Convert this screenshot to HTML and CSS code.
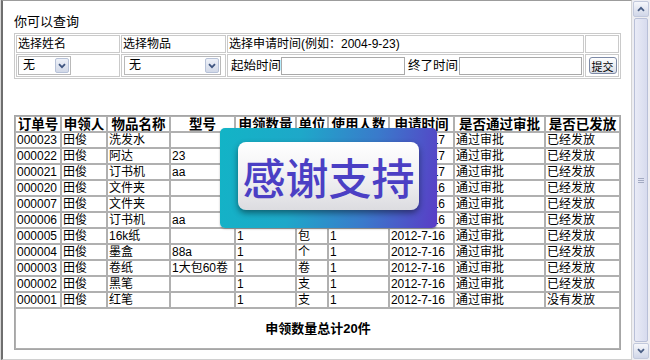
FILE: index.html
```html
<!DOCTYPE html>
<html lang="zh">
<head>
<meta charset="utf-8">
<title>申领查询</title>
<link rel="stylesheet" href="styles.css">
</head>
<body>
<div class="frame">
  <div class="title">你可以查询</div>
  <table class="search">
    <tr class="r1">
      <td class="c1">选择姓名</td>
      <td class="c2">选择物品</td>
      <td class="c3">选择申请时间(例如：2004-9-23)</td>
      <td class="c4"></td>
    </tr>
    <tr class="r2">
      <td><div class="select w1"><span class="val">无</span><span class="arrow"><svg width="8" height="6" viewBox="0 0 8 6"><path d="M1 1.2l3 3 3-3" fill="none" stroke="#3f5580" stroke-width="1.8"/></svg></span></div></td>
      <td><div class="select w2"><span class="val">无</span><span class="arrow"><svg width="8" height="6" viewBox="0 0 8 6"><path d="M1 1.2l3 3 3-3" fill="none" stroke="#3f5580" stroke-width="1.8"/></svg></span></div></td>
      <td><div class="dates"><span class="lbl">起始时间</span><span class="input in1"></span><span class="lbl lbl2">终了时间</span><span class="input in2"></span></div></td>
      <td class="btncell"><button class="btn" type="button">提交</button></td>
    </tr>
  </table>

  <table class="list">
    <colgroup>
      <col class="k1"><col class="k2"><col class="k3"><col class="k4"><col class="k5">
      <col class="k6"><col class="k7"><col class="k8"><col class="k9"><col class="k10">
    </colgroup>
    <thead>
      <tr><th>订单号</th><th>申领人</th><th>物品名称</th><th>型号</th><th>申领数量</th><th>单位</th><th>使用人数</th><th>申请时间</th><th>是否通过审批</th><th>是否已发放</th></tr>
    </thead>
    <tbody>
      <tr><td>000023</td><td>田俊</td><td>洗发水</td><td></td><td></td><td></td><td></td><td class="d">2012-7-17</td><td>通过审批</td><td>已经发放</td></tr>
      <tr><td>000022</td><td>田俊</td><td>阿达</td><td>23</td><td></td><td></td><td></td><td class="d">2012-7-17</td><td>通过审批</td><td>已经发放</td></tr>
      <tr><td>000021</td><td>田俊</td><td>订书机</td><td>aa</td><td></td><td></td><td></td><td class="d">2012-7-17</td><td>通过审批</td><td>已经发放</td></tr>
      <tr><td>000020</td><td>田俊</td><td>文件夹</td><td></td><td></td><td></td><td></td><td class="d">2012-7-16</td><td>通过审批</td><td>已经发放</td></tr>
      <tr><td>000007</td><td>田俊</td><td>文件夹</td><td></td><td></td><td></td><td></td><td class="d">2012-7-16</td><td>通过审批</td><td>已经发放</td></tr>
      <tr><td>000006</td><td>田俊</td><td>订书机</td><td>aa</td><td></td><td></td><td></td><td class="d">2012-7-16</td><td>通过审批</td><td>已经发放</td></tr>
      <tr><td>000005</td><td>田俊</td><td>16k纸</td><td></td><td>1</td><td>包</td><td>1</td><td class="d">2012-7-16</td><td>通过审批</td><td>已经发放</td></tr>
      <tr><td>000004</td><td>田俊</td><td>墨盒</td><td>88a</td><td>1</td><td>个</td><td>1</td><td class="d">2012-7-16</td><td>通过审批</td><td>已经发放</td></tr>
      <tr><td>000003</td><td>田俊</td><td>卷纸</td><td>1大包60卷</td><td>1</td><td>卷</td><td>1</td><td class="d">2012-7-16</td><td>通过审批</td><td>已经发放</td></tr>
      <tr><td>000002</td><td>田俊</td><td>黑笔</td><td></td><td>1</td><td>支</td><td>1</td><td class="d">2012-7-16</td><td>通过审批</td><td>已经发放</td></tr>
      <tr><td>000001</td><td>田俊</td><td>红笔</td><td></td><td>1</td><td>支</td><td>1</td><td class="d">2012-7-16</td><td>通过审批</td><td>没有发放</td></tr>
      <tr class="total"><td colspan="10">申领数量总计20件</td></tr>
    </tbody>
  </table>

  <div class="thanks"><div class="thanks-card">感谢支持</div></div>
</div>
<div class="scroll">
  <div class="sbtn"><svg width="8" height="6" viewBox="0 0 8 6"><path d="M1 4.8l3-3 3 3" fill="none" stroke="#4a5f86" stroke-width="1.8"/></svg></div>
  <div class="thumb"><span class="grip"></span></div>
  <div class="sbtn"><svg width="8" height="6" viewBox="0 0 8 6"><path d="M1 1.2l3 3 3-3" fill="none" stroke="#4a5f86" stroke-width="1.8"/></svg></div>
</div>
</body>
</html>
```
FILE: styles.css
```css
html, body {
  margin: 0;
  padding: 0;
}
body {
  width: 650px;
  height: 360px;
  overflow: hidden;
  display: flex;
  background: #d8d8d8;
  font-family: "Liberation Sans", "Noto Sans CJK SC", sans-serif;
  color: #000;
}
.frame {
  position: relative;
  width: 631px;
  height: 360px;
  box-sizing: border-box;
  margin-left: 1px;
  background: #fff;
  border-top: 1px solid #9c9c9c;
  border-left: 2px solid #6f6f6f;
  border-bottom: 1px solid #d0d0d0;
  border-right: 1px solid #d4d4d4;
  padding: 13px 0 0 11px;
  overflow: hidden;
}
.title {
  font-size: 13px;
  line-height: 16px;
  height: 16px;
}

/* search table */
.search {
  margin-top: 3px;
  width: 607px;
  table-layout: fixed;
  border-collapse: separate;
  border-spacing: 1px;
  border: 1px solid #cacaca;
  font-size: 12px;
}
.search td {
  box-sizing: border-box;
  border: 1px solid #cacaca;
  padding: 0 1px;
  white-space: nowrap;
  overflow: hidden;
}
.search .c1 { width: 104px; }
.search .c2 { width: 105px; }
.search .c3 { width: 357px; }
.search .c4 { width: 34px; }
.search .r1 td { height: 18px; line-height: 16px; }
.search .r2 td { height: 23px; line-height: 16px; }

.select {
  display: flex;
  align-items: center;
  justify-content: space-between;
  height: 19px;
  box-sizing: border-box;
  border: 1px solid #b9b9b9;
  background: #fff;
  padding-left: 4px;
}
.select.w1 { width: 53px; }
.select.w2 { width: 97px; margin-left: 1px; }
.val { font-size: 12px; line-height: 15px; }
.arrow {
  width: 14px;
  height: 15px;
  margin-right: 1px;
  box-sizing: border-box;
  border: 1px solid #b7c2d8;
  border-radius: 2px;
  background: linear-gradient(#eef1f8, #d2d9e8);
  display: flex;
  align-items: center;
  justify-content: center;
}
.dates {
  display: flex;
  align-items: center;
}
.lbl { font-size: 12.5px; line-height: 16px; padding-left: 2px; }
.lbl2 { padding-left: 3px; padding-right: 1px; }
.input {
  height: 18px;
  box-sizing: border-box;
  border: 1px solid #a9a9a9;
  background: #fff;
}
.in1 { width: 124px; }
.in2 { width: 123px; }
.btncell { text-align: center; }
.btn {
  width: 28px;
  height: 17px;
  padding: 0;
  margin: 0 0 0 1px;
  font-family: "Noto Sans CJK SC", sans-serif;
  font-size: 11px;
  line-height: 14px;
  color: #000;
  border: 1px solid #7d8aa6;
  border-radius: 3px;
  background: linear-gradient(#ffffff, #d9dde6);
  vertical-align: middle;
}

/* list table */
.list {
  margin-top: 36px;
  width: 607px;
  table-layout: fixed;
  border-collapse: separate;
  border-spacing: 0;
  border: 1px solid #a6a6a6;
  font-size: 12px;
}
.list col.k1 { width: 46px; }
.list col.k2 { width: 46px; }
.list col.k3 { width: 63px; }
.list col.k4 { width: 65px; }
.list col.k5 { width: 61px; }
.list col.k6 { width: 32px; }
.list col.k7 { width: 61px; }
.list col.k8 { width: 65px; }
.list col.k9 { width: 91px; }
.list col.k10 { width: 75px; }
.list th,
.list td {
  border: 1px solid #b0b0b0;
  padding: 0 0 0 1px;
  line-height: 14px;
  white-space: nowrap;
}
.list td { overflow: hidden; }
.list th {
  font-size: 13.5px;
  font-weight: bold;
  text-align: center;
  padding: 1px 0 0;
  line-height: 13px;
  vertical-align: middle;
}
.list td { text-align: left; }
.list td.d { letter-spacing: -0.1px; }
.list .total td {
  height: 39px;
  text-align: center;
  font-weight: bold;
  font-size: 13px;
}

/* overlay */
.thanks {
  position: absolute;
  left: 217px;
  top: 127px;
  width: 217px;
  height: 100px;
  box-sizing: border-box;
  padding: 14px 18px;
  border-radius: 5px;
  background: linear-gradient(100deg, #12b4c6 0%, #1ea8c9 35%, #3a7acb 68%, #5a3cc6 100%);
  box-shadow: 0 1px 2px rgba(0, 0, 0, 0.3);
}
.thanks-card {
  width: 181px;
  height: 68px;
  border-radius: 8px;
  background: linear-gradient(#ffffff, #f0f0f2 55%, #dcdce0);
  box-shadow: 0 3px 6px rgba(0, 0, 0, 0.45);
  display: flex;
  align-items: center;
  justify-content: center;
  font-family: "Noto Sans CJK SC", sans-serif;
  font-size: 43px;
  line-height: 48px;
  color: #4b3fc4;
  font-weight: 500;
}

/* scrollbar */
.scroll {
  width: 18px;
  height: 360px;
  box-sizing: border-box;
  padding: 1px 1px 1px 1px;
  background: #eeeef2;
  display: flex;
  flex-direction: column;
  gap: 1px;
}
.sbtn {
  height: 16px;
  box-sizing: border-box;
  border: 1px solid #c2c9dc;
  border-radius: 2px;
  background: linear-gradient(#f6f7fb, #d0d6e8);
  display: flex;
  align-items: center;
  justify-content: center;
}
.thumb {
  flex: 1;
  margin: 0 1px;
  box-sizing: border-box;
  border: 1px solid #b9c0d8;
  border-radius: 2px;
  background: linear-gradient(90deg, #e9ebf6, #d7dbee);
  display: flex;
  align-items: center;
  justify-content: center;
}
.grip {
  width: 6px;
  height: 5px;
  background: repeating-linear-gradient(#a3aac2 0 1px, transparent 1px 2px);
}
```
